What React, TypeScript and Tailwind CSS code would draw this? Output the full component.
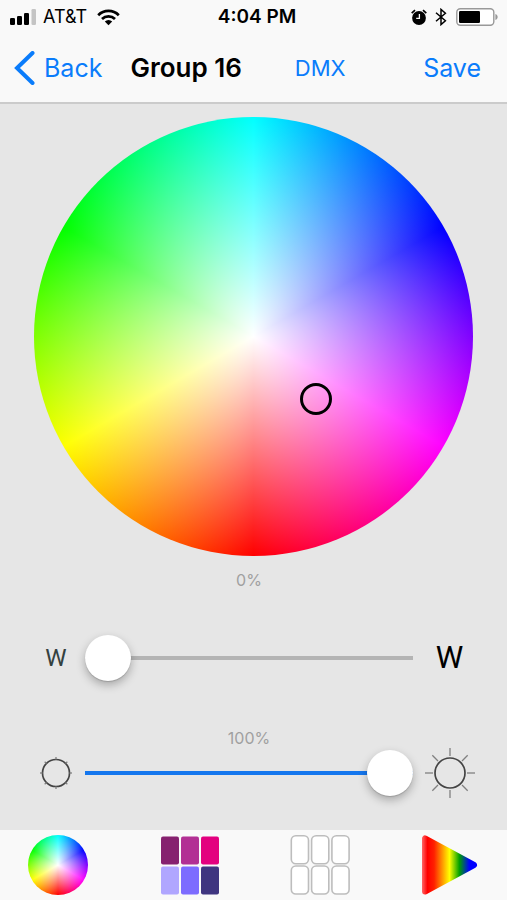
import { useState } from "react";
import type { PointerEvent } from "react";
import clsx from "clsx";

type Tab = "wheel" | "palette" | "presets" | "effects";

const PALETTE = ["#86216f", "#b23094", "#e3007f", "#b0a6ff", "#7d6cff", "#3f3580"];

const THUMB =
  "[&::-webkit-slider-thumb]:appearance-none [&::-webkit-slider-thumb]:w-[46px] [&::-webkit-slider-thumb]:h-[46px] [&::-webkit-slider-thumb]:rounded-full [&::-webkit-slider-thumb]:bg-white [&::-webkit-slider-thumb]:shadow-[0_4px_10px_rgba(0,0,0,0.28),0_1px_1px_rgba(0,0,0,0.15)]";

function ColorDisc({ className }: { className?: string }) {
  return (
    <div
      className={clsx(
        "aspect-square w-full rounded-full bg-[radial-gradient(closest-side,#fff,rgba(255,255,255,0)),conic-gradient(#0ff,#00f,#f0f,#f00,#ff0,#0f0,#0ff)]",
        className
      )}
    />
  );
}

function ColorWheel() {
  const [pos, setPos] = useState({ x: 64.3, y: 64.3 });

  const pick = (e: PointerEvent<HTMLDivElement>) => {
    const box = e.currentTarget.getBoundingClientRect();
    const x = ((e.clientX - box.left) / box.width) * 100;
    const y = ((e.clientY - box.top) / box.height) * 100;
    if (Math.hypot(x - 50, y - 50) <= 50) setPos({ x, y });
  };

  return (
    <div className="relative" onPointerDown={pick}>
      <ColorDisc />
      <span
        className="absolute size-8 -translate-1/2 rounded-full border-3 border-black"
        style={{ left: `${pos.x}%`, top: `${pos.y}%` }}
      />
    </div>
  );
}

function StatusBar() {
  return (
    <div className="grid h-[34px] grid-cols-[1fr_auto_1fr] items-center pl-[10px] pr-[3px] text-black">
      <div className="flex items-center gap-[6px]">
        <svg width="27" height="17" viewBox="0 0 27 17">
          <rect x="0" y="9" width="5" height="7" rx="1.3" />
          <rect x="7" y="7" width="5" height="9" rx="1.3" />
          <rect x="14" y="4" width="5" height="12" rx="1.3" />
          <rect x="21.5" y="0" width="4.5" height="16" rx="1.3" fill="#c4c4c4" />
        </svg>
        <span className="text-lg leading-6">AT&amp;T</span>
        <svg className="ml-[4px]" width="23" height="17" viewBox="0 0 23 17">
          <g fill="none" stroke="#000" strokeWidth="2.7">
            <path d="M1.2 6.2a14.6 14.6 0 0 1 20.6 0" />
            <path d="M5 10a9.2 9.2 0 0 1 13 0" />
          </g>
          <path d="M7.8 12.6a5.3 5.3 0 0 1 7.4 0l-3.7 3.7z" />
        </svg>
      </div>
      <span className="text-[19px] leading-6 font-semibold">4:04 PM</span>
      <div className="flex items-center justify-end pr-[6px]">
        <svg width="16" height="17" viewBox="0 0 16 17">
          <circle cx="8" cy="9" r="6.9" />
          <path d="M0.7 4.2L4 1.2M15.3 4.2L12 1.2" stroke="#000" strokeWidth="1.7" />
          <path d="M8.4 5v4.4H5.2" fill="none" stroke="#f9f9f9" strokeWidth="1.3" />
        </svg>
        <svg className="ml-2" width="12" height="18" viewBox="0 0 12 18">
          <path d="M1 4.8l9.4 8L6 16.6V1.4l4.4 3.8L1 13.2" fill="none" stroke="#000" strokeWidth="1.5" />
        </svg>
        <svg className="ml-[9px]" width="42" height="18" viewBox="0 0 42 18">
          <rect x="0.8" y="0.8" width="37" height="16.4" rx="3.5" fill="#fff" stroke="#999" strokeWidth="1.4" />
          <rect x="3" y="3" width="21" height="12" rx="1.2" />
          <path d="M39.4 6c3 1 3 5 0 6z" fill="#999" />
        </svg>
      </div>
    </div>
  );
}

function NavBar() {
  return (
    <nav className="flex h-[68px] items-center pl-[14px] pr-[26px] text-[25px] leading-8 text-[#0a7cfb]">
      <button type="button" className="flex items-center gap-[9px]">
        <svg width="21" height="34" viewBox="0 0 21 34">
          <path d="M18.5 2L3 17l15.5 15" fill="none" stroke="currentColor" strokeWidth="4" strokeLinecap="round" />
        </svg>
        Back
      </button>
      <h1 className="ml-7 text-[26px] font-semibold text-black">Group 16</h1>
      <button type="button" className="ml-[53px] text-[22px]">
        DMX
      </button>
      <button type="button" className="ml-auto">
        Save
      </button>
    </nav>
  );
}

function Sun({ rays }: { rays: "short" | "long" }) {
  const long = rays === "long";
  const r = long ? 15 : 13.5;
  const from = long ? 17 : 13.5;
  const to = long ? 25 : 16;
  return (
    <svg className="size-[50px] shrink-0" viewBox="-25 -25 50 50" fill="none">
      <circle r={r} stroke="#444" strokeWidth="1.7" />
      {[0, 45, 90, 135, 180, 225, 270, 315].map((deg) => (
        <path key={deg} d={`M0 ${from}V${to}`} transform={`rotate(${deg})`} stroke="#808080" strokeWidth="1.3" />
      ))}
    </svg>
  );
}

interface LevelProps {
  id: string;
  name: string;
  initial: number;
  fill: string;
  low: React.ReactNode;
  high: React.ReactNode;
  className?: string;
}

function Level({ id, name, initial, fill, low, high, className }: LevelProps) {
  const [value, setValue] = useState(initial);

  return (
    <div className={clsx("grid grid-cols-[38px_1fr_53px] items-center gap-x-[10px] pl-[37px] pr-[31px]", className)}>
      <output htmlFor={id} className="col-start-2 text-center text-base leading-5 text-[#a0a0a0]">
        {value}%
      </output>
      <label htmlFor={id} className="col-start-1 flex justify-center">
        {low}
      </label>
      <input
        id={id}
        type="range"
        aria-label={name}
        value={value}
        onChange={(e) => setValue(Number(e.target.value))}
        className={clsx(
          "h-[46px] w-full appearance-none bg-[length:100%_4px] bg-center bg-no-repeat outline-none",
          THUMB
        )}
        style={{ backgroundImage: `linear-gradient(to right, ${fill} ${value}%, #b4b4b4 ${value}%)` }}
      />
      <span className="flex justify-center">{high}</span>
    </div>
  );
}

function TabIcon({ tab }: { tab: Tab }) {
  if (tab === "wheel") return <ColorDisc />;

  if (tab === "palette") {
    return (
      <svg viewBox="0 0 60 60">
        {PALETTE.map((color, i) => (
          <rect key={color} x={2 + (i % 3) * 20} y={i < 3 ? 1.5 : 31.5} width="18" height="28" rx="2" fill={color} />
        ))}
      </svg>
    );
  }

  if (tab === "presets") {
    return (
      <svg viewBox="0 0 60 60">
        {PALETTE.map((color, i) => (
          <rect
            key={color}
            x={1.3 + (i % 3) * 20.3}
            y={i < 3 ? 0.8 : 31}
            width="17.2"
            height="28"
            rx="4.5"
            fill="#fff"
            stroke="#bdbdbd"
            strokeWidth="1.6"
          />
        ))}
      </svg>
    );
  }

  return (
    <svg viewBox="0 0 60 60">
      <defs>
        <linearGradient id="rainbow" gradientUnits="userSpaceOnUse" x1="1" y1="0" x2="56" y2="0">
          <stop offset="0" stopColor="#f66" />
          <stop offset="0.1" stopColor="#f00" />
          <stop offset="0.22" stopColor="#ff2000" />
          <stop offset="0.5" stopColor="#ff0" />
          <stop offset="0.68" stopColor="#00a000" />
          <stop offset="0.86" stopColor="#00f" />
          <stop offset="1" stopColor="#00f" />
        </linearGradient>
      </defs>
      <path
        d="M4 3.5v53L53 30z"
        fill="url(#rainbow)"
        stroke="url(#rainbow)"
        strokeWidth="6"
        strokeLinejoin="round"
      />
    </svg>
  );
}

const TABS: { id: Tab; label: string }[] = [
  { id: "wheel", label: "Color wheel" },
  { id: "palette", label: "Palette" },
  { id: "presets", label: "Presets" },
  { id: "effects", label: "Effects" },
];

export default function App() {
  const [active, setActive] = useState<Tab>("wheel");

  return (
    <div className="flex min-h-screen flex-col bg-[#e6e6e6] font-['Inter','Liberation_Sans',sans-serif]">
      <header className="border-b-2 border-[#cbcbcb] bg-[#f9f9f9]">
        <StatusBar />
        <NavBar />
      </header>

      <main className="flex-1 pt-[13px] pb-[30px]">
        <div className="px-[34px]">
          <ColorWheel />
        </div>
        <Level
          id="white"
          name="White"
          initial={0}
          fill="#b4b4b4"
          className="mt-[14px] gap-y-[45px]"
          low={<span className="font-['Roboto',sans-serif] text-2xl text-[#34413f]">W</span>}
          high={<span className="font-['Roboto',sans-serif] text-[31px] leading-9 text-black">W</span>}
        />
        <Level
          id="brightness"
          name="Brightness"
          initial={100}
          fill="#1577ee"
          className="mt-[47px]"
          low={<Sun rays="short" />}
          high={<Sun rays="long" />}
        />
      </main>

      <footer className="flex h-[70px] items-center justify-between bg-[#f9f9f9] pl-[28px] pr-[26px]">
        {TABS.map((tab) => (
          <button
            key={tab.id}
            type="button"
            aria-label={tab.label}
            aria-pressed={active === tab.id}
            onClick={() => setActive(tab.id)}
            className="size-[60px]"
          >
            <TabIcon tab={tab.id} />
          </button>
        ))}
      </footer>
    </div>
  );
}
